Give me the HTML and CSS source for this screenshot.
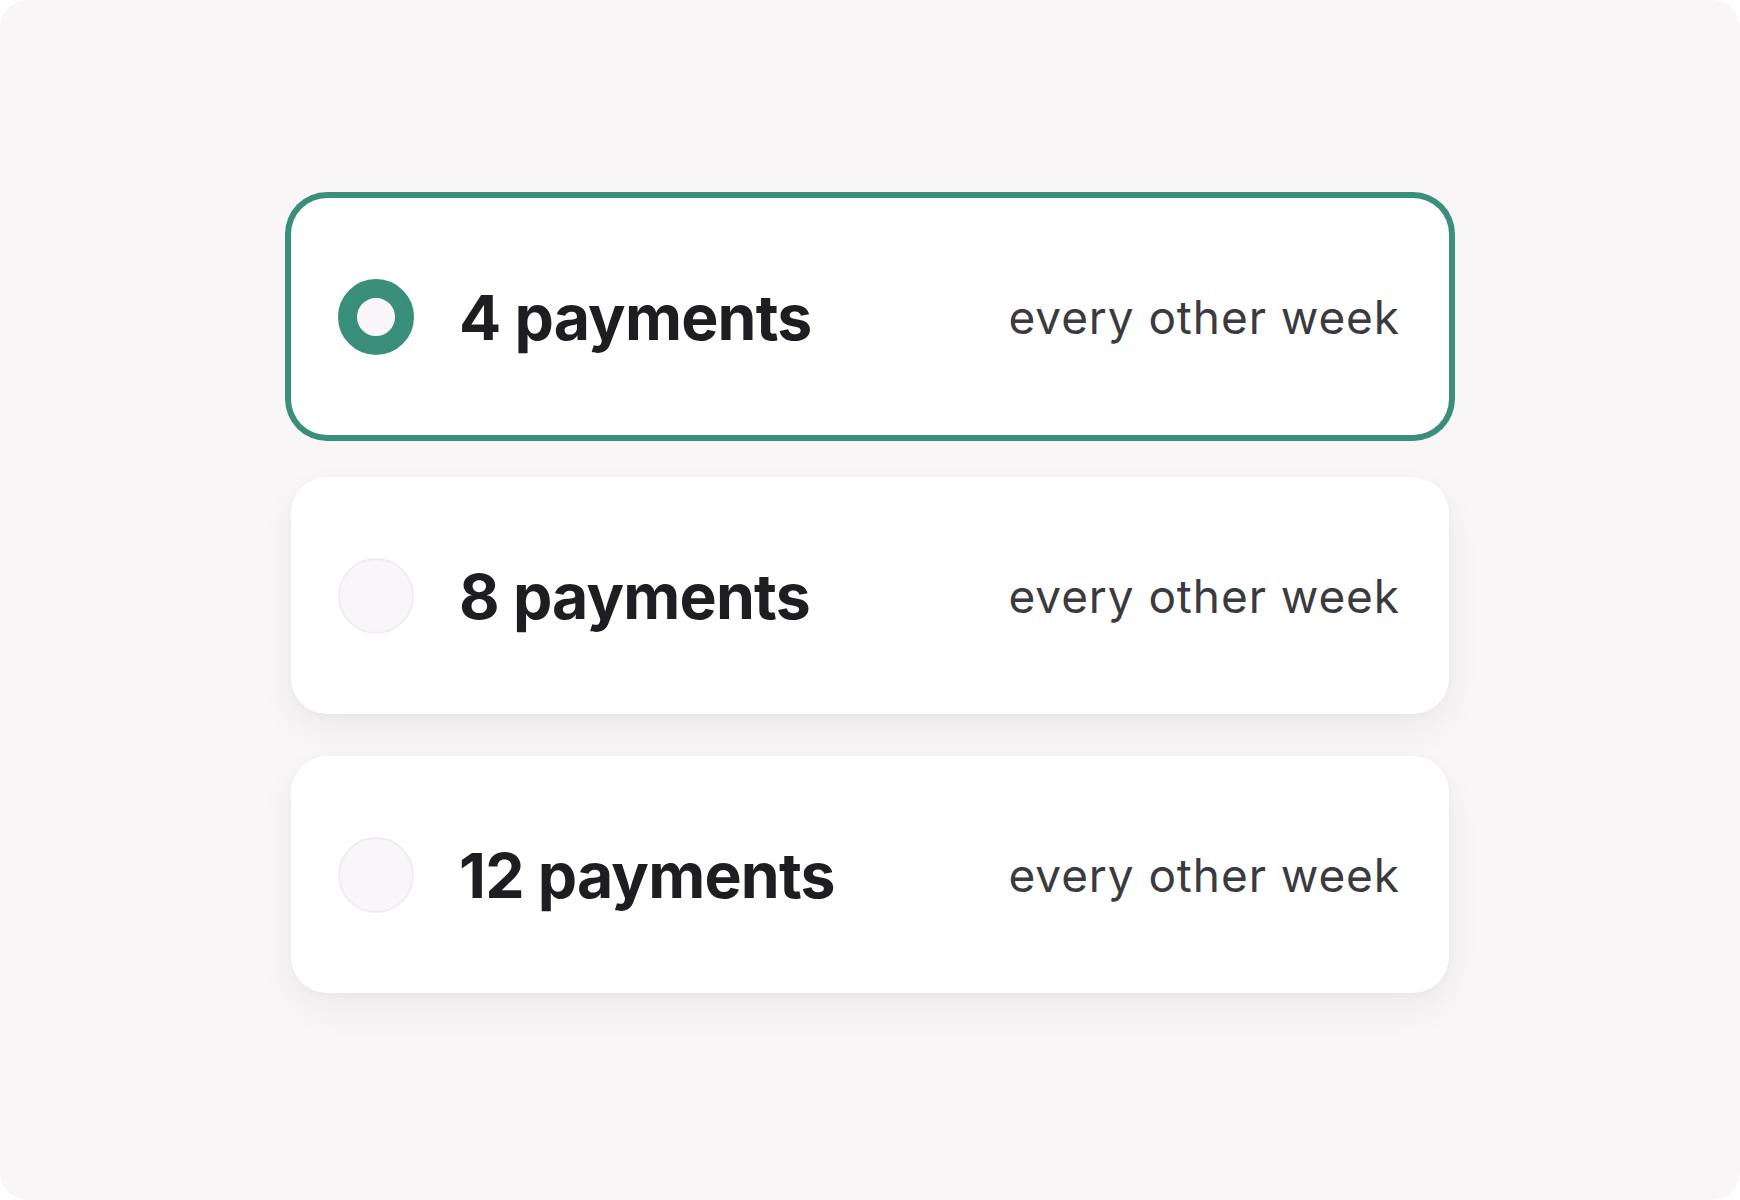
FILE: index.html
```html
<!DOCTYPE html>
<html lang="en">
<head>
<meta charset="utf-8">
<title>Payment plans</title>
<link rel="stylesheet" href="styles.css">
</head>
<body>
<main class="panel">
  <div class="options">
    <label class="option is-selected">
      <span class="radio"></span>
      <span class="count">4 payments</span>
      <span class="freq">every other week</span>
    </label>
    <label class="option">
      <span class="radio"></span>
      <span class="count">8 payments</span>
      <span class="freq">every other week</span>
    </label>
    <label class="option">
      <span class="radio"></span>
      <span class="count">12 payments</span>
      <span class="freq">every other week</span>
    </label>
  </div>
</main>
</body>
</html>
```

FILE: styles.css
```css
* { box-sizing: border-box; }

html, body {
  margin: 0;
  padding: 0;
  background: #ffffff;
}

body {
  font-family: Inter, "Noto Sans", "Liberation Sans", sans-serif;
}

.panel {
  width: 1740px;
  height: 1200px;
  background: #f8f6f7;
  border-radius: 28px;
  display: flex;
  justify-content: center;
  padding-top: 198px;
}

.options {
  width: 1158px;
  display: flex;
  flex-direction: column;
  gap: 42px;
}

.option {
  height: 237px;
  background: #ffffff;
  border-radius: 36px;
  display: flex;
  align-items: center;
  padding: 0 49px 0 47px;
  box-shadow: 0 16px 36px rgba(40, 30, 40, 0.055), 0 2px 10px rgba(40, 30, 40, 0.03);
}

.option.is-selected {
  box-shadow: 0 0 0 6px #3a8f7b;
}

.radio {
  width: 76px;
  height: 76px;
  border-radius: 50%;
  flex: none;
  background: #f8f6f8;
  border: 2px solid #efedef;
  margin-right: 45px;
}

.is-selected .radio {
  background: #f8f6f8;
  border: 19px solid #3a8f7b;
}

.count {
  font-size: 62.5px;
  font-weight: 700;
  color: #1e1e22;
  letter-spacing: -0.8px;
  flex: 1;
}

.freq {
  font-size: 46px;
  font-weight: 400;
  color: #3b3a3f;
  letter-spacing: 0.9px;
}
```
